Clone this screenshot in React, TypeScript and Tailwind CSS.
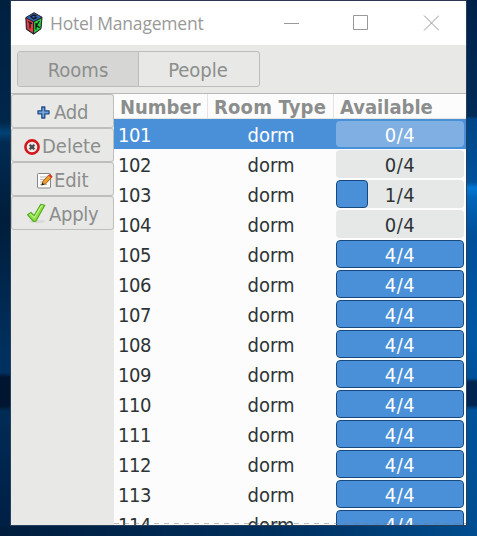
import React from "react";

type Room = { number: number; type: string; taken: number };

const rooms: Room[] = Array.from({ length: 14 }, (_, i) => ({
  number: 101 + i,
  type: "dorm",
  taken: i >= 4 ? 4 : i === 2 ? 1 : 0,
}));

function GtkLogo() {
  return (
    <svg width="18" height="23" viewBox="0 0 18 23" className="shrink-0">
      <path d="M9 .7 17 5.2 16 16.8 8.6 22.2 1.4 17.3 .8 5.6Z" fill="#20252b" stroke="#20252b" strokeWidth="1" strokeLinejoin="round" />
      <path d="M9 1.3 16 5.3 8.6 9.3 1.7 5.6Z" fill="#3465bd" />
      <path d="M1.5 6.6 8 10v11l-5.8-4.2Z" fill="#e83b43" />
      <path d="M9.2 10 16.3 6.4 15.4 16.4 9.2 20.9Z" fill="#2bd23c" />
      <path d="M11.5 3.8 8.5 3 5.8 4.8 8.7 7l2.6-1.3-1.8-.8M3 9.5l4 2M5 10.8v5.8M11 11v6.5m3.4-8.5L11.5 13.5l3.2 2.2" fill="none" stroke="#15181c" strokeWidth="1.3" />
    </svg>
  );
}

function AddIcon() {
  return (
    <svg width="13" height="13" viewBox="0 0 13 13">
      <path d="M4.8 1h3v3.8H12v3H7.8V12h-3V7.8H1v-3h3.8Z" fill="#74a4dc" stroke="#204a87" strokeWidth="1.3" strokeLinejoin="round" />
    </svg>
  );
}

function DeleteIcon() {
  return (
    <svg width="16" height="16" viewBox="0 0 16 16">
      <circle cx="8" cy="8" r="6.6" fill="#f4f4f2" stroke="#d4161b" strokeWidth="2.6" />
      <circle cx="8" cy="8" r="4.6" fill="#e4e5e2" />
      <path d="m5.7 5.7 4.6 4.6m0-4.6-4.6 4.6" stroke="#454846" strokeWidth="2.2" />
    </svg>
  );
}

function EditIcon() {
  return (
    <svg width="16" height="17" viewBox="0 0 16 17">
      <rect x=".5" y="1.5" width="13" height="14.5" rx="1" fill="#fcfcfa" stroke="#858783" />
      <path d="M3 5h7M3 7.5h5M3 10h3M3 12.5h7" stroke="#b9bbb8" />
      <path d="m5 12.8 1-3.6 6-6.5 2.8 2.6L8.5 11.9Z" fill="#f19b28" stroke="#8c4a11" strokeWidth=".8" />
      <path d="m11.5 3.5 1.5-1.5 2.6 2.4-1.5 1.7Z" fill="#d93226" />
      <path d="m4.3 13.6.9-3 2.2 2Z" fill="#262626" />
    </svg>
  );
}

function ApplyIcon() {
  return (
    <svg width="22" height="21" viewBox="0 0 22 21">
      <ellipse cx="11" cy="18.5" rx="8" ry="1.6" fill="#d9dad6" />
      <path d="m1.6 11.8 3.4-2.3 3 3.2L14.8 1.3l4 1L9.8 18.2 7.6 18.5Z" fill="#8ee044" stroke="#55ad20" strokeWidth="1.2" strokeLinejoin="round" />
      <path d="m3.6 11.7 1-.7 3.6 3.7L15.5 2.7l1.4.4" fill="none" stroke="#cdf6a5" />
    </svg>
  );
}

const actions = [
  { label: "Add", icon: <AddIcon />, pad: "pl-[25px] gap-[4px]", iconPos: "mt-[3px]", spacing: "tracking-[-0.2px]" },
  { label: "Delete", icon: <DeleteIcon />, pad: "pl-[12px] gap-[2px]", iconPos: "mt-[3px]", spacing: "tracking-[0px]" },
  { label: "Edit", icon: <EditIcon />, pad: "pl-[25px] gap-[1px]", iconPos: "mt-[3px]", spacing: "tracking-[-0.1px]" },
  { label: "Apply", icon: <ApplyIcon />, pad: "pl-[14px] gap-[1px]", iconPos: "mt-0", spacing: "tracking-[-0.3px]" },
];

function Bar({ taken, selected }: { taken: number; selected: boolean }) {
  const track = selected ? "mt-[2px] h-[26px] bg-[#80afe3]" : "mt-[1px] h-[28px] bg-[#e6e8e7]";
  const color = selected || taken === 4 ? "text-white" : "text-[#2e3436]";
  const line = selected ? "h-[26px] leading-[28px]" : "h-[28px] leading-[30px]";
  return (
    <div className={`grid w-[128px] overflow-hidden rounded-[4px] ${track}`}>
      {taken > 0 && (
        <div
          className="col-start-1 row-start-1 h-[28px] rounded-[4px] border border-[#184880] bg-[#4a90d9]"
          style={{ width: `${taken * 25}%` }}
        />
      )}
      <span className={`z-10 col-start-1 row-start-1 text-center tracking-[0.5px] ${line} ${color}`}>
        {taken}/4
      </span>
    </div>
  );
}

export default function App() {
  return (
    <div className="flex h-[536px] w-[477px] flex-col overflow-hidden bg-[#00264b] font-['DejaVu_Sans_Condensed','DejaVu_Sans',sans-serif] [font-stretch:condensed] text-[20px] leading-[30px]">
      <div className="flex h-[526px]">
        <div className="w-[10px] bg-[linear-gradient(#002040_0px,#00264a_122px,#004375_133px,#002b52_142px,#001d3b_220px,#00305d_350px,#003060_373px,#001530_377px,#001530_406px,#002c55_411px,#001f45_526px)]" />
        <div className="relative flex w-[457px] flex-col overflow-hidden border border-[#26405c] border-t-[#29384f] bg-[#e8e8e6]">
          <header className="flex h-[44px] shrink-0 items-center bg-white pl-[14px]">
            <GtkLogo />
            <span className="ml-[7px] w-[231px] whitespace-nowrap font-['Open_Sans',sans-serif] text-[17.5px] tracking-[-0.2px] text-[#999] [font-stretch:normal]">Hotel Management</span>
            <svg width="157" height="16" viewBox="0 0 157 16" fill="none" stroke="#999" className="-mt-px ml-px">
              <path d="M2 8.5h15M71.5 .5h14v14h-14ZM142 .5l15 15m0-15-15 15" />
            </svg>
          </header>
          <div className="flex h-[49px] shrink-0 border-b border-[#b9bab7] pl-[6px] pt-[6px] text-[#8b8e8c]">
            <div className="flex h-[36px] w-[243px] overflow-hidden rounded-[3px] border border-[#bcbdba]">
              <button className="w-[121px] border-r border-[#bcbdba] bg-[#d6d6d5] pt-[2px] tracking-[0px]">Rooms</button>
              <button className="flex-1 pr-[2px] pt-[2px] tracking-[0px]">People</button>
            </div>
          </div>
          <main className="flex h-[431px] overflow-hidden">
            <nav className="w-[103px] shrink-0 text-[#8b8e8c]">
              {actions.map((a) => (
                <button key={a.label} className={`flex h-[34px] w-[103px] items-center rounded-[3px] border border-[#bebfbc] ${a.pad}`}>
                  <span className={`shrink-0 ${a.iconPos}`}>{a.icon}</span>
                  <span className={`mt-[2px] ${a.spacing}`}>{a.label}</span>
                </button>
              ))}
            </nav>
            <section className="w-[352px] shrink-0 bg-[#fcfcfc] text-[#2e3436]">
              <div className="flex h-[25px] items-center border-b border-[#e4e5e3] font-bold text-[#8b8e8c]">
                <span className="h-[24px] w-[94px] border-r border-[#e4e4e4] pl-[6px] leading-[26px]">Number</span>
                <span className="h-[24px] w-[126px] border-r border-[#e4e4e4] pl-[6px] leading-[26px] tracking-[0.2px]">Room Type</span>
                <span className="h-[24px] pl-[6px] leading-[26px]">Available</span>
              </div>
              {rooms.map((r, i) => (
                <div key={r.number} className={`flex h-[30px] ${i === 0 ? "bg-[#4a90d9] text-white" : ""}`}>
                  <span className="w-[94px] pl-[4px] pt-[1px] tracking-[-0.5px]">{r.number}</span>
                  <span className="w-[128px] pr-[2px] pt-[1px] text-center">{r.type}</span>
                  <Bar taken={r.taken} selected={i === 0} />
                </div>
              ))}
            </section>
          </main>
          <div className="absolute bottom-[1px] left-[103px] right-0 z-20 h-px bg-[repeating-linear-gradient(90deg,#7777_0_5px,transparent_5px_10px)]" />
        </div>
        <div className="w-[10px] bg-[linear-gradient(#00224a_0px,#002c57_116px,#004687_119px,#00519b_182px,#0078d5_188px,#0065b8_198px,#004f99_235px,#0058a5_340px,#005199_378px,#002550_382px,#002550_405px,#00539a_410px,#004e91_526px)]" />
      </div>
      <div className="h-[10px] bg-[linear-gradient(90deg,#001d3d,#00305f_60%,#004d90)]" />
    </div>
  );
}
